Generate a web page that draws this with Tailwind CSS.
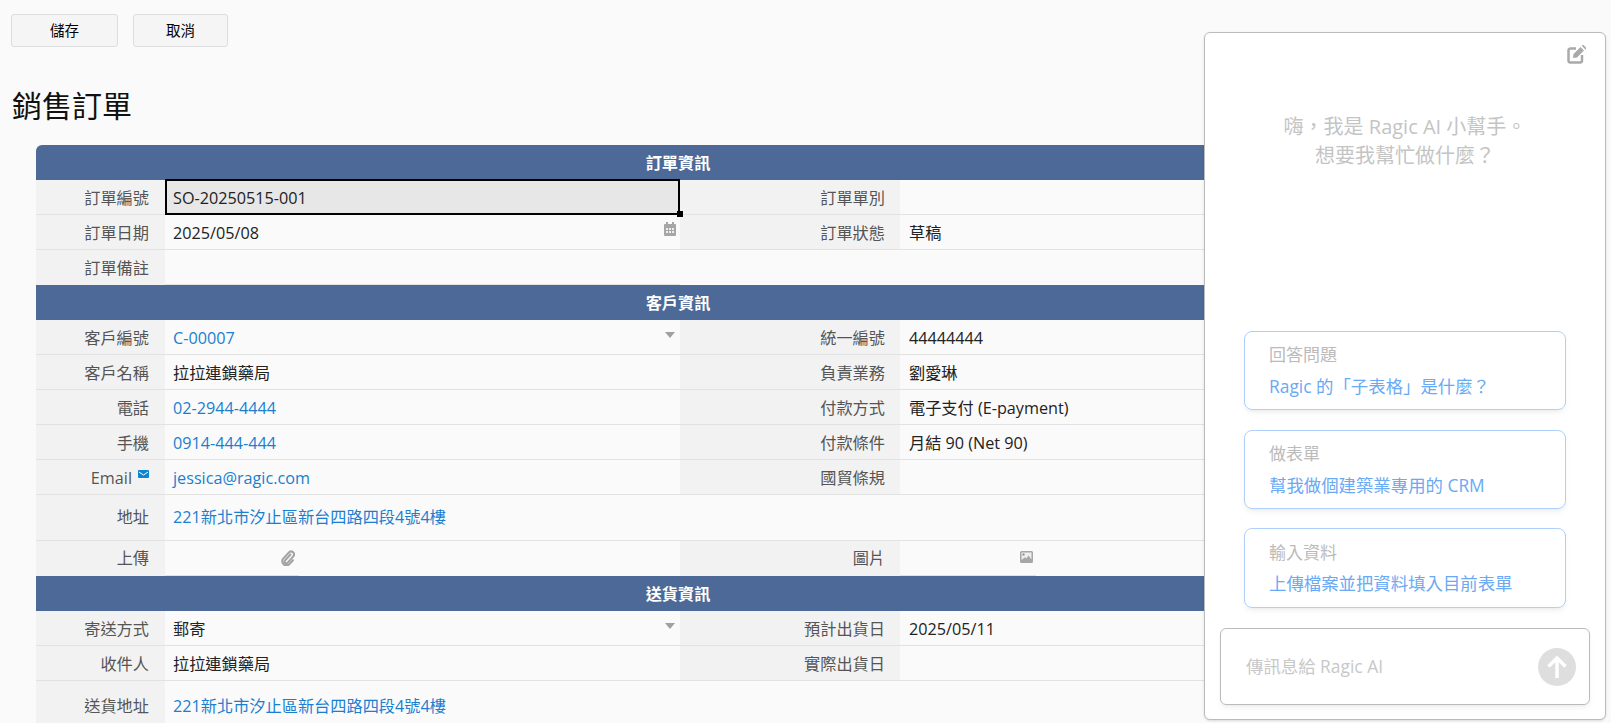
<!DOCTYPE html>
<html lang="zh-Hant">
<head>
  <meta charset="UTF-8" />
  <meta name="viewport" content="width=device-width, initial-scale=1.0"/>
  <title>銷售訂單</title>
  <script src="https://cdn.jsdelivr.net/npm/@tailwindcss/browser@4"></script>
</head>
<body class="relative h-screen overflow-hidden bg-[#fafafa] text-[#222] text-[16.2px] font-['Open_Sans','Noto_Sans_CJK_TC',sans-serif]">

  <!-- toolbar -->
  <div class="flex gap-[15px] pl-[11px] pt-[14px]">
    <button class="w-[107px] h-[33px] bg-[#f5f5f5] border border-[#ddd] rounded-[3px] text-[14.5px] text-black">儲存</button>
    <button class="w-[95px] h-[33px] bg-[#f5f5f5] border border-[#ddd] rounded-[3px] text-[14.5px] text-black">取消</button>
  </div>

  <h1 class="pl-[12px] mt-[38px] h-[41px] leading-[41px] text-[30px] text-[#111]">銷售訂單</h1>

  <!-- form -->
  <div class="ml-[36px] mt-[19px] w-[1284px]">
    <div class="h-[35px] pt-[2px] flex items-center justify-center bg-[#4c6997] rounded-t-[6px] text-white font-bold">訂單資訊</div>

    <div class="grid grid-cols-[129px_515px_220px_420px] h-[35px] [&>div]:pt-[2px]">
      <div class="flex items-center justify-end pr-[16px] bg-[#f2f2f2] text-[#555] border-b border-[#e2e2e2]">訂單編號</div>
      <div class="relative flex items-center pl-[6px] bg-[#e7e7e7] border-2 border-black -mt-px">SO-20250515-001
        <span class="absolute right-[-5px] bottom-[-4px] w-[6px] h-[6px] bg-black"></span>
      </div>
      <div class="flex items-center justify-end pr-[15px] bg-[#f2f2f2] text-[#555] border-b border-[#e2e2e2]">訂單單別</div>
      <div class="border-b border-[#e2e2e2]"></div>
    </div>

    <div class="grid grid-cols-[129px_515px_220px_420px] h-[35px] [&>div]:pt-[2px]">
      <div class="flex items-center justify-end pr-[16px] bg-[#f2f2f2] text-[#555] border-b border-[#e2e2e2]">訂單日期</div>
      <div class="flex items-center justify-between pl-[8px] pr-[4px] border-b border-[#e2e2e2]">2025/05/08
        <svg class="w-[12px] h-[14px] mb-[8px] text-[#a6a6a6]" viewBox="0 0 12 14" fill="currentColor"><path d="M2 0h2v2h4V0h2v2h1a1 1 0 0 1 1 1v10a1 1 0 0 1-1 1H1a1 1 0 0 1-1-1V3a1 1 0 0 1 1-1h1z"/><path fill="#eee" d="M2 6h2v2H2zM5 6h2v2H5zM8 6h2v2H8zM2 9h2v2H2zM5 9h2v2H5zM8 9h2v2H8z"/></svg>
      </div>
      <div class="flex items-center justify-end pr-[15px] bg-[#f2f2f2] text-[#555] border-b border-[#e2e2e2]">訂單狀態</div>
      <div class="flex items-center pl-[9px] border-b border-[#e2e2e2]">草稿</div>
    </div>

    <div class="grid grid-cols-[129px_515px_640px] h-[35px] [&>div]:pt-[2px]">
      <div class="flex items-center justify-end pr-[16px] bg-[#f2f2f2] text-[#555]">訂單備註</div>
      <div class="border-b border-[#e2e2e2]"></div>
      <div></div>
    </div>

    <div class="h-[35px] pt-[2px] flex items-center justify-center bg-[#4c6997] text-white font-bold">客戶資訊</div>

    <div class="grid grid-cols-[129px_515px_220px_420px] h-[35px] [&>div]:pt-[2px]">
      <div class="flex items-center justify-end pr-[16px] bg-[#f2f2f2] text-[#555] border-b border-[#e2e2e2]">客戶編號</div>
      <div class="flex items-center justify-between pl-[8px] pr-[5px] border-b border-[#e2e2e2] text-[#1a7fd0]">C-00007
        <span class="w-0 h-0 mb-[6px] border-x-[5px] border-x-transparent border-t-[6px] border-t-[#a0a0a0]"></span>
      </div>
      <div class="flex items-center justify-end pr-[15px] bg-[#f2f2f2] text-[#555] border-b border-[#e2e2e2]">統一編號</div>
      <div class="flex items-center pl-[9px] border-b border-[#e2e2e2]">44444444</div>
    </div>

    <div class="grid grid-cols-[129px_515px_220px_420px] h-[35px] [&>div]:pt-[2px]">
      <div class="flex items-center justify-end pr-[16px] bg-[#f2f2f2] text-[#555] border-b border-[#e2e2e2]">客戶名稱</div>
      <div class="flex items-center pl-[8px] border-b border-[#e2e2e2]">拉拉連鎖藥局</div>
      <div class="flex items-center justify-end pr-[15px] bg-[#f2f2f2] text-[#555] border-b border-[#e2e2e2]">負責業務</div>
      <div class="flex items-center pl-[9px] border-b border-[#e2e2e2]">劉愛琳</div>
    </div>

    <div class="grid grid-cols-[129px_515px_220px_420px] h-[35px] [&>div]:pt-[2px]">
      <div class="flex items-center justify-end pr-[16px] bg-[#f2f2f2] text-[#555] border-b border-[#e2e2e2]">電話</div>
      <div class="flex items-center pl-[8px] border-b border-[#e2e2e2] text-[#1a7fd0]">02-2944-4444</div>
      <div class="flex items-center justify-end pr-[15px] bg-[#f2f2f2] text-[#555] border-b border-[#e2e2e2]">付款方式</div>
      <div class="flex items-center pl-[9px] border-b border-[#e2e2e2]">電子支付 (E-payment)</div>
    </div>

    <div class="grid grid-cols-[129px_515px_220px_420px] h-[35px] [&>div]:pt-[2px]">
      <div class="flex items-center justify-end pr-[16px] bg-[#f2f2f2] text-[#555] border-b border-[#e2e2e2]">手機</div>
      <div class="flex items-center pl-[8px] border-b border-[#e2e2e2] text-[#1a7fd0]">0914-444-444</div>
      <div class="flex items-center justify-end pr-[15px] bg-[#f2f2f2] text-[#555] border-b border-[#e2e2e2]">付款條件</div>
      <div class="flex items-center pl-[9px] border-b border-[#e2e2e2]">月結 90 (Net 90)</div>
    </div>

    <div class="grid grid-cols-[129px_515px_220px_420px] h-[35px] [&>div]:pt-[2px]">
      <div class="flex items-center justify-end gap-[6px] pr-[16px] bg-[#f2f2f2] text-[#555] border-b border-[#e2e2e2]">Email
        <svg class="w-[11px] h-[8px] mb-[8px]" viewBox="0 0 11 8"><path fill="#0b84d4" d="M1 0h9a1 1 0 0 1 1 1v6a1 1 0 0 1-1 1H1a1 1 0 0 1-1-1V1a1 1 0 0 1 1-1z"/><path fill="none" stroke="#fff" d="M1 2l4.500 3L10 2"/></svg>
      </div>
      <div class="flex items-center pl-[8px] border-b border-[#e2e2e2] text-[#1a7fd0]">jessica@ragic.com</div>
      <div class="flex items-center justify-end pr-[15px] bg-[#f2f2f2] text-[#555] border-b border-[#e2e2e2]">國貿條規</div>
      <div class="border-b border-[#e2e2e2]"></div>
    </div>

    <div class="grid grid-cols-[129px_1155px] h-[46px]">
      <div class="flex items-center justify-end pr-[16px] bg-[#f2f2f2] text-[#555] border-b border-[#e2e2e2]">地址</div>
      <div class="flex items-center pl-[8px] border-b border-[#e2e2e2] text-[#1a7fd0]">221新北市汐止區新台四路四段4號4樓</div>
    </div>

    <div class="grid grid-cols-[129px_515px_220px_420px] h-[35px]">
      <div class="flex items-center justify-end pr-[16px] bg-[#f2f2f2] text-[#555]">上傳</div>
      <div>
        <div class="flex items-center justify-end w-[134px] h-full pr-[4px] border-b border-[#e2e2e2]">
          <svg class="w-[14px] h-[16px]" viewBox="0 0 14 16" fill="none" stroke="#a3a3a3" stroke-width="2" stroke-linecap="round"><path d="M9.500 4.500L4 10.500a1.700 1.700 0 0 0 2.500 2.300l6-6.600a3 3 0 0 0-4.400-4L2 8.800a4.200 4.200 0 0 0 6 5.700l4-4.200"/></svg>
        </div>
      </div>
      <div class="flex items-center justify-end pr-[15px] bg-[#f2f2f2] text-[#555]">圖片</div>
      <div>
        <div class="flex items-center justify-end w-[136px] h-full pr-[3px] pb-[2px] border-b border-[#e2e2e2]">
          <svg class="w-[13px] h-[12px]" viewBox="0 0 13 12"><path fill="#a6a6a6" d="M1.500 0h10A1.500 1.500 0 0 1 13 1.500v9a1.500 1.500 0 0 1-1.500 1.500h-10A1.500 1.500 0 0 1 0 10.500v-9A1.500 1.500 0 0 1 1.500 0z"/><path fill="#eee" d="M1.500 1.500h10v7L8.500 4.500 6.300 7.500 5 6.300 1.500 9z"/><path fill="#8a8a8a" d="M2.500 2.500h2v2h-2z"/></svg>
        </div>
      </div>
    </div>

    <div class="h-[35px] pt-[2px] flex items-center justify-center bg-[#4c6997] text-white font-bold">送貨資訊</div>

    <div class="grid grid-cols-[129px_515px_220px_420px] h-[35px] [&>div]:pt-[2px]">
      <div class="flex items-center justify-end pr-[16px] bg-[#f2f2f2] text-[#555] border-b border-[#e2e2e2]">寄送方式</div>
      <div class="flex items-center justify-between pl-[8px] pr-[5px] border-b border-[#e2e2e2]">郵寄
        <span class="w-0 h-0 mb-[6px] border-x-[5px] border-x-transparent border-t-[6px] border-t-[#a0a0a0]"></span>
      </div>
      <div class="flex items-center justify-end pr-[15px] bg-[#f2f2f2] text-[#555] border-b border-[#e2e2e2]">預計出貨日</div>
      <div class="flex items-center pl-[9px] border-b border-[#e2e2e2]">2025/05/11</div>
    </div>

    <div class="grid grid-cols-[129px_515px_220px_420px] h-[35px] [&>div]:pt-[2px]">
      <div class="flex items-center justify-end pr-[16px] bg-[#f2f2f2] text-[#555] border-b border-[#e2e2e2]">收件人</div>
      <div class="flex items-center pl-[8px] border-b border-[#e2e2e2]">拉拉連鎖藥局</div>
      <div class="flex items-center justify-end pr-[15px] bg-[#f2f2f2] text-[#555] border-b border-[#e2e2e2]">實際出貨日</div>
      <div class="border-b border-[#e2e2e2]"></div>
    </div>

    <div class="grid grid-cols-[129px_1155px] h-[50px] [&>div]:pt-[2px]">
      <div class="flex items-center justify-end pr-[16px] bg-[#f2f2f2] text-[#555] border-b border-[#e2e2e2]">送貨地址</div>
      <div class="flex items-center pl-[8px] border-b border-[#e2e2e2] text-[#1a7fd0]">221新北市汐止區新台四路四段4號4樓</div>
    </div>
  </div>

  <!-- AI assistant panel -->
  <div class="absolute left-[1204px] top-[32px] w-[402px] h-[688px] flex flex-col bg-white border border-[#bbb] rounded-[6px] shadow-sm">
    <div class="flex justify-end pt-[12px] pr-[19px]">
      <svg class="w-[19px] h-[19px]" viewBox="0 0 19 19" fill="none"><path stroke="#aaa" stroke-width="2.500" d="M9 3.500H3.500a2 2 0 0 0-2 2v10a2 2 0 0 0 2 2H13a2 2 0 0 0 2-2V10"/><path fill="#aaa" d="M6.500 9L13.500 2l3.500 3.500-7 7-4 .5zM14.700.8l.8-.8h1l3 3v1l-.8.8z"/></svg>
    </div>
    <div class="mt-[48px] text-center text-[20px] leading-[29px] text-[#c4c4c4]">
      <div>嗨，我是 Ragic AI 小幫手。</div>
      <div>想要我幫忙做什麼？</div>
    </div>

    <div class="mt-auto flex flex-col gap-[19px] px-[39px]">
      <div class="h-[79px] mb-px flex flex-col justify-center gap-[5px] pl-[24px] border border-[#aed0fb] rounded-[8px] shadow-md shadow-black/5">
        <div class="text-[17px] text-[#bbb]">回答問題</div>
        <div class="text-[17.4px] text-[#6aa9f4]">Ragic 的「子表格」是什麼？</div>
      </div>
      <div class="h-[79px] flex flex-col justify-center gap-[5px] pl-[24px] border border-[#aed0fb] rounded-[8px] shadow-md shadow-black/5">
        <div class="text-[17px] text-[#bbb]">做表單</div>
        <div class="text-[17.4px] text-[#6aa9f4]">幫我做個建築業專用的 CRM</div>
      </div>
      <div class="h-[80px] flex flex-col justify-center gap-[5px] pl-[24px] border border-[#aed0fb] rounded-[8px] shadow-md shadow-black/5">
        <div class="text-[17px] text-[#bbb]">輸入資料</div>
        <div class="text-[17.4px] text-[#6aa9f4]">上傳檔案並把資料填入目前表單</div>
      </div>
    </div>

    <div class="mx-[15px] mt-[20px] mb-[14px] h-[77px] flex items-center justify-between pl-[25px] pr-[13px] border border-[#bbb] rounded-[6px] shadow-md shadow-black/5">
      <span class="text-[17.4px] text-[#c8c8c8]">傳訊息給 Ragic AI</span>
      <span class="w-[38px] h-[38px] flex items-center justify-center rounded-full bg-[#dedede]">
        <svg class="w-[22px] h-[24px]" viewBox="0 0 22 24" fill="none" stroke="#fff" stroke-width="3.500"><path d="M11 23V3M2.500 11.500L11 3l8.500 8.500"/></svg>
      </span>
    </div>
  </div>

</body>
</html>
